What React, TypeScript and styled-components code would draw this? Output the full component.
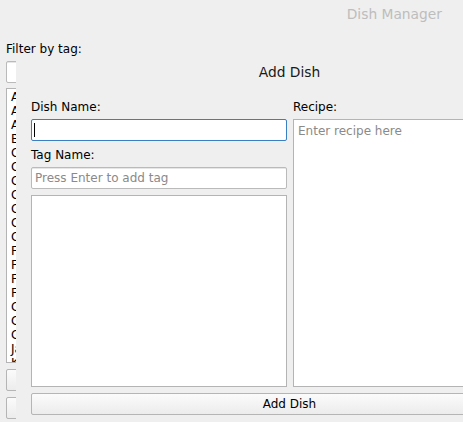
import React from "react";
import styled, { createGlobalStyle } from "styled-components";

const Global = createGlobalStyle`
  html, body { margin: 0; padding: 0; background: #efefef; }
  body { font-family: "DejaVu Sans", "Liberation Sans", sans-serif; font-size: 12px; color: #000; }
  * { box-sizing: border-box; }
`;

const Screen = styled.div`
  position: relative;
  width: 463px;
  height: 422px;
  overflow: hidden;
  background: #efefef;
`;

const MainWindow = styled.div`
  display: flex;
  flex-direction: column;
  height: 100%;
`;

const TitleBar = styled.div<{ $active?: boolean }>`
  height: ${(p) => (p.$active ? 32 : 28)}px;
  display: flex;
  align-items: center;
  justify-content: ${(p) => (p.$active ? "center" : "flex-end")};
  padding-right: ${(p) => (p.$active ? 0 : 21)}px;
  font-size: 13.8px;
  color: ${(p) => (p.$active ? "#1a1a1a" : "#bdbdbd")};
  flex-shrink: 0;
`;

const MainBody = styled.div`
  display: flex;
  flex-direction: column;
  padding: 12px 0 0 6px;
  width: 520px;
`;

const Label = styled.div<{ $mt?: number }>`
  height: 16px;
  padding-top: 2px;
  line-height: 14px;
  margin-top: ${(p) => p.$mt ?? 0}px;
  white-space: nowrap;
`;

const LineEdit = styled.input<{ $mt?: number }>`
  display: block;
  width: 100%;
  height: 22px;
  margin: ${(p) => p.$mt ?? 0}px 0 0 0;
  padding: 0 3px;
  border: 1px solid #bababa;
  border-radius: 2px;
  background: #fff;
  box-shadow: inset 0 1px 0 #e6e6e6;
  font: inherit;
  color: #000;
  outline: none;
  &::placeholder { color: #8a8a8a; }
`;

const FocusedEdit = styled.div<{ $mt?: number }>`
  position: relative;
  height: 22px;
  margin-top: ${(p) => p.$mt ?? 0}px;
  border: 1px solid #3a7fc1;
  border-radius: 2px;
  background: #fff;
`;

const Caret = styled.span`
  position: absolute;
  left: 2px;
  top: 3px;
  width: 1px;
  height: 14px;
  background: #000;
`;

const FilterList = styled.div`
  margin-top: 5px;
  height: 275px;
  width: 100%;
  border: 1px solid #b4b4b4;
  background: #fff;
  padding: 1px 0 0 4px;
  overflow: hidden;
`;

const ListItem = styled.div`
  height: 14px;
  line-height: 14px;
  white-space: nowrap;
`;

const PushButton = styled.button<{ $mt?: number }>`
  display: flex;
  align-items: center;
  justify-content: center;
  width: 100%;
  height: 22px;
  margin-top: ${(p) => p.$mt ?? 0}px;
  padding: 0;
  border: 1px solid #b5b5b5;
  border-radius: 2px;
  background: linear-gradient(#fbfbfb, #ececec);
  font: inherit;
  color: #000;
`;

const Dialog = styled.div`
  position: absolute;
  left: 16px;
  top: 56px;
  width: 547px;
  height: 420px;
  background: #efefef;
  display: flex;
  flex-direction: column;
`;

const DialogBody = styled.div`
  display: flex;
  flex-direction: column;
  padding: 10px 15px 0 15px;
`;

const Columns = styled.div`
  display: grid;
  grid-template-columns: 256px 255px;
  column-gap: 6px;
  height: 289px;
`;

const Column = styled.div`
  display: flex;
  flex-direction: column;
  min-height: 0;
`;

const TagList = styled.div`
  flex: 1;
  margin-top: 6px;
  border: 1px solid #b4b4b4;
  background: #fff;
`;

const RecipeEdit = styled.textarea`
  flex: 1;
  margin: 5px 0 0 0;
  padding: 3px 4px;
  border: 1px solid #b4b4b4;
  background: #fff;
  font: inherit;
  line-height: 16px;
  resize: none;
  outline: none;
  &::placeholder { color: #8a8a8a; }
`;

const filterItems = [
  "A", "A", "A", "B", "C", "C", "C", "C", "C", "C", "C",
  "F", "F", "F", "F", "G", "G", "G", "Ja", "K",
];

export default function App() {
  return (
    <Screen>
      <Global />
      <MainWindow>
        <TitleBar>Dish Manager</TitleBar>
        <MainBody>
          <Label>Filter by tag:</Label>
          <LineEdit $mt={5} readOnly />
          <FilterList>
            {filterItems.map((t, i) => (
              <ListItem key={i}>{t}</ListItem>
            ))}
          </FilterList>
          <PushButton $mt={6} />
          <PushButton $mt={6} />
        </MainBody>
      </MainWindow>
      <Dialog>
        <TitleBar $active>Add Dish</TitleBar>
        <DialogBody>
          <Columns>
            <Column>
              <Label>Dish Name:</Label>
              <FocusedEdit $mt={5}>
                <Caret />
              </FocusedEdit>
              <Label $mt={5}>Tag Name:</Label>
              <LineEdit $mt={5} placeholder="Press Enter to add tag" readOnly />
              <TagList />
            </Column>
            <Column>
              <Label>Recipe:</Label>
              <RecipeEdit placeholder="Enter recipe here" readOnly />
            </Column>
          </Columns>
          <PushButton $mt={6}>Add Dish</PushButton>
        </DialogBody>
      </Dialog>
    </Screen>
  );
}
